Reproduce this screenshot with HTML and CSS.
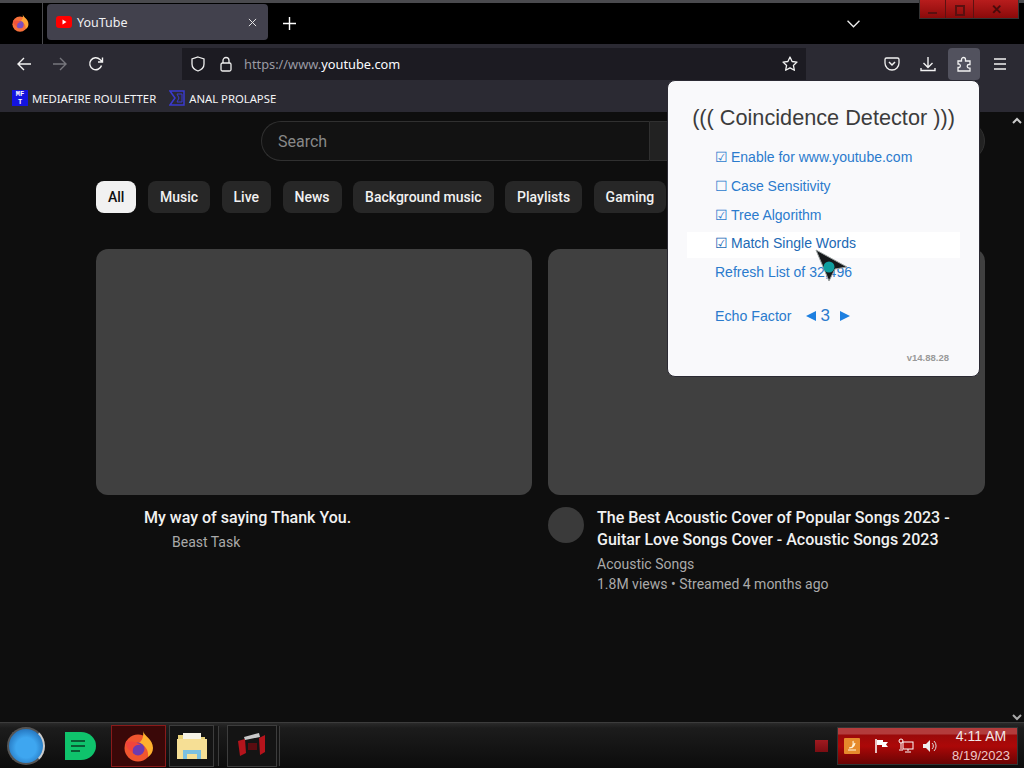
FILE: index.html
```html
<!DOCTYPE html>
<html lang="en">
<head>
<meta charset="utf-8">
<title>YouTube</title>
<link rel="stylesheet" href="styles.css">
</head>
<body>
<div class="desktop">
  <div class="topline"></div>
  <header class="tabbar">
    <div class="ff-slot">
      <svg class="ff-small" viewBox="0 0 32 32"><circle cx="16" cy="18" r="13.500" fill="#f8703a"/><path d="M21 1c1 5 10 8 10 17 0 4-2 7-5 9 1-7-3-12-9-14 3-2 5-7 4-12z" fill="#ffa436"/><circle cx="16" cy="19" r="6.500" fill="#7a4fc0"/><path d="M4 11c3 1 6 0 8 1s5 1 7 3c-5-1-9 2-8 7-5-2-8-6-7-11z" fill="#f1543c"/></svg>
    </div>
    <div class="tab">
      <svg class="yt-icon" viewBox="0 0 16 12"><rect width="16" height="12" rx="3" fill="#f00"/><path d="M6.500 3.500v5l4-2.500z" fill="#fff"/></svg>
      <span class="tab-title">YouTube</span>
      <svg class="tab-close" viewBox="0 0 10 10"><path d="M1 1l8 8M9 1l-8 8" stroke="#e6e6e6" stroke-width="1.100"/></svg>
    </div>
    <svg class="new-tab" viewBox="0 0 12 12"><path d="M6 0v12M0 6h12" stroke="#fff" stroke-width="1.300"/></svg>
    <svg class="tab-list" viewBox="0 0 12 7"><path d="M.5.500L6 6l5.500-5.500" fill="none" stroke="#eee" stroke-width="1.200"/></svg>
  </header>

  <nav class="navbar">
    <svg class="nav-icon" viewBox="0 0 16 16"><path d="M15 8H2M8 2L2 8l6 6" fill="none" stroke="#f2f2f2" stroke-width="1.400"/></svg>
    <svg class="nav-icon" viewBox="0 0 16 16"><path d="M1 8h13M8 2l6 6-6 6" fill="none" stroke="#77777d" stroke-width="1.400"/></svg>
    <svg class="nav-icon" viewBox="0 0 16 16"><path d="M13.500 9.500A6 6 0 1 1 12 3.500L14 5.500M14.500 1.500v4.500h-4.500" fill="none" stroke="#f2f2f2" stroke-width="1.400"/></svg>
    <div class="urlbar">
      <svg class="url-icon" viewBox="0 0 16 16"><path d="M8 1l6 2v5c0 3.500-3 6-6 7-3-1-6-3.500-6-7V3z" fill="none" stroke="#eee" stroke-width="1.300"/></svg>
      <svg class="url-icon" viewBox="0 0 16 16"><path d="M5 7V4.500a3 3 0 0 1 6 0V7" fill="none" stroke="#eee" stroke-width="1.300"/><rect x="3" y="7" width="10" height="8" rx="1.500" fill="none" stroke="#eee" stroke-width="1.300"/></svg>
      <span class="url"><span class="url-dim">https://www.</span>youtube.com</span>
      <svg class="url-star" viewBox="0 0 16 16"><path d="M8 1l2.100 4.500 4.900.6-3.600 3.300 1 4.900L8 11.900l-4.400 2.400 1-4.900L1 6.100l4.900-.6z" fill="none" stroke="#f2f2f2" stroke-width="1.300" stroke-linejoin="round"/></svg>
    </div>
    <div class="nav-right">
      <span class="nr-slot"><svg class="nav-icon" viewBox="0 0 16 16"><path d="M2.500 2h11A1.500 1.500 0 0 1 15 3.500V7a7 7 0 0 1-14 0V3.500A1.500 1.500 0 0 1 2.500 2z" fill="none" stroke="#f2f2f2" stroke-width="1.300"/><path d="M5 6l3 3 3-3" fill="none" stroke="#f2f2f2" stroke-width="1.500"/></svg></span>
      <span class="nr-slot"><svg class="nav-icon" viewBox="0 0 16 16"><path d="M8 1v10M3.500 7L8 11.500 12.500 7M1 12v2.500h14V12" fill="none" stroke="#f2f2f2" stroke-width="1.400"/></svg></span>
      <span class="nr-slot active"><svg class="nav-icon" viewBox="0 0 16 16"><path d="M2 5h3.500V3.500a2 2 0 0 1 4 0V5H14v3.500h-1a1.800 1.800 0 0 0 0 3.600h1V15H2v-3.500h1.200a1.900 1.900 0 0 0 0-3.500H2z" fill="none" stroke="#f2f2f2" stroke-width="1.300"/></svg></span>
      <span class="nr-slot"><svg class="nav-icon" viewBox="0 0 16 16"><path d="M2 3h12M2 8h12M2 13h12" stroke="#f2f2f2" stroke-width="1.400"/></svg></span>
    </div>
  </nav>

  <div class="bookmarks">
    <span class="bm">
      <span class="mf-icon"><span>MF</span><span>T</span></span>MEDIAFIRE ROULETTER
    </span>
    <span class="bm">
      <svg class="bm-icon" viewBox="0 0 16 16"><path d="M1 1h14v14H1l5-7z" fill="none" stroke="#3a3ad0" stroke-width="1.500"/><path d="M8 4h5v8H8l2-4z" fill="none" stroke="#3a3ad0"/></svg>ANAL PROLAPSE
    </span>
  </div>

  <main class="content">
    <svg class="scroll-up" viewBox="0 0 10 7"><path d="M1 6l4-4 4 4" fill="none" stroke="#ccc" stroke-width="2"/></svg>
    <div class="masthead">
      <div class="search">
        <div class="search-input">Search</div>
        <div class="search-btn"></div>
      </div>
    </div>
    <div class="chips">
      <span class="chip on">All</span>
      <span class="chip">Music</span>
      <span class="chip">Live</span>
      <span class="chip">News</span>
      <span class="chip">Background music</span>
      <span class="chip">Playlists</span>
      <span class="chip">Gaming</span>
    </div>
    <div class="videos">
      <article class="video">
        <div class="thumb"></div>
        <div class="meta meta-plain">
          <h3 class="v-title">My way of saying Thank You.</h3>
          <p class="v-sub v-indent">Beast Task</p>
        </div>
      </article>
      <article class="video">
        <div class="thumb"></div>
        <div class="meta">
          <div class="avatar"></div>
          <div>
            <h3 class="v-title">The Best Acoustic Cover of Popular Songs 2023 - Guitar Love Songs Cover - Acoustic Songs 2023</h3>
            <p class="v-sub">Acoustic Songs</p>
            <p class="v-sub">1.8M views • Streamed 4 months ago</p>
          </div>
        </div>
      </article>
    </div>
    <svg class="scroll-down" viewBox="0 0 10 7"><path d="M1 1l4 4 4-4" fill="none" stroke="#aaa" stroke-width="2"/></svg>
  </main>

  <footer class="taskbar">
    <div class="start"></div>
    <svg class="task-app" viewBox="0 0 32 30"><path d="M1 1h16a15 14 0 0 1 0 28H1z" fill="#0fc36c"/><path d="M7 10h14M7 15h14M7 20h9" stroke="#0a5c35" stroke-width="2.200"/></svg>
    <div class="task-btn task-ff">
      <svg class="task-img" viewBox="0 0 32 32"><circle cx="16" cy="18" r="13.500" fill="#f0552f"/><path d="M21 1c1 5 10 8 10 17 0 4-2 7-5 9 1-7-3-12-9-14 3-2 5-7 4-12z" fill="#ffb02e"/><circle cx="16" cy="19" r="6.500" fill="#6e3bb0"/><path d="M4 11c3 1 6 0 8 1s5 1 7 3c-5-1-9 2-8 7-5-2-8-6-7-11z" fill="#f1443c"/></svg>
    </div>
    <div class="task-btn task-files">
      <svg class="task-img" viewBox="0 0 32 32"><path d="M2 5h10l2 2h15v6H2z" fill="#e8d27a"/><rect x="7" y="3" width="18" height="6" fill="#f5f3e6"/><path d="M1 9h30v20H1z" fill="#f6df95"/><path d="M7 20h18v9h-4v-5H11v5H7z" fill="#7cc0e0"/></svg>
    </div>
    <div class="task-btn task-game">
      <svg class="task-img" viewBox="0 0 32 32"><path d="M2 11l7-2 1 14-6 3zM23 8l6-3v17l-5 3z" fill="#b5141c"/><path d="M8 7l15-4 1 4-15 3z" fill="#c9c9c9"/><path d="M12 13h9v7h-9z" fill="#5a0c10"/></svg>
    </div>
    <div class="tray-spacer"></div>
    <div class="tray-mini"></div>
    <div class="tray">
      <svg class="tray-app" viewBox="0 0 16 16"><rect width="16" height="16" rx="1" fill="#e68a2c"/><path d="M4 12h8M5 10c2 0 5-1 6-5M8 10c1-2 2-4 1-7" fill="none" stroke="#fff3d9" stroke-width="1.200"/></svg>
      <svg class="tray-icon" viewBox="0 0 16 16"><path d="M2 1v14" stroke="#fff" stroke-width="1.500"/><path d="M3 2h6v2h5l-2 2.500 2 2.500H8V7H3z" fill="#fff"/></svg>
      <svg class="tray-icon" viewBox="0 0 16 16"><rect x="5" y="4" width="10" height="7" fill="none" stroke="#fff"/><path d="M10 11v2M7 14h6" stroke="#fff"/><circle cx="3" cy="3" r="2" fill="none" stroke="#fff"/><path d="M3 5v6M1 12h4" stroke="#fff"/></svg>
      <svg class="tray-icon" viewBox="0 0 16 16"><path d="M1 6h3l4-4v12l-4-4H1z" fill="#eee"/><path d="M10 5a4 4 0 0 1 0 6M12 3a7 7 0 0 1 0 10" fill="none" stroke="#ddd"/></svg>
      <div class="clock"><span class="clock-time">4:11 AM</span><span class="clock-date">8/19/2023</span></div>
    </div>
  </footer>

  <div class="winbtns">
    <span class="wb wb-min"><i class="wb-glyph-min"></i></span>
    <span class="wb wb-max"><i class="wb-glyph-max"></i></span>
    <span class="wb wb-close">✕</span>
  </div>

  <aside class="popup">
    <h2 class="pop-title">((( Coincidence Detector )))</h2>
    <ul class="pop-list">
      <li class="pop-row"><span class="box">☑</span>Enable for www.youtube.com</li>
      <li class="pop-row"><span class="box">☐</span>Case Sensitivity</li>
      <li class="pop-row"><span class="box">☑</span>Tree Algorithm</li>
      <li class="pop-row hover"><span class="box">☑</span>Match Single Words</li>
      <li class="pop-row">Refresh List of 32,496</li>
    </ul>
    <div class="echo">
      <span>Echo Factor</span>
      <span class="arrow left"></span>
      <span class="echo-val">3</span>
      <span class="arrow right"></span>
    </div>
    <div class="version">v14.88.28</div>
  </aside>

  <svg class="cursor" viewBox="0 0 34 34"><path d="M1 1l31 17-12 2-6 12z" fill="#16191b" stroke="#9aa0a0" stroke-width="1"/><circle cx="14" cy="18" r="5.500" fill="#0f9fa0"/></svg>
</div>
</body>
</html>
```
FILE: styles.css
```css
* { box-sizing: border-box; }
html, body { margin: 0; padding: 0; }
body { width: 1024px; height: 768px; overflow: hidden; background: #0e0e0e; font-family: "Liberation Sans", Arial, sans-serif; }
.desktop { position: relative; width: 1024px; height: 768px; display: flex; flex-direction: column; overflow: hidden; }

.topline { height: 3px; background: #4a4a4e; flex: none; }
.tabbar { height: 41px; flex: none; background: #000; display: flex; align-items: center; }
.ff-slot { width: 43px; height: 41px; border-right: 1px solid #4a4a4e; display: flex; align-items: center; justify-content: center; flex: none; margin-right: 4px; }
.ff-small { width: 18px; height: 18px; margin-left: -3px; margin-top: -1px; }
.tab { width: 221px; height: 36px; margin-top: -3px; background: #42414d; border-radius: 4px; display: flex; align-items: center; padding: 0 11px 0 9px; color: #f0f0f2; font: 12.500px "Noto Sans", sans-serif; flex: none; }
.yt-icon { width: 16px; height: 12px; flex: none; margin-right: 5px; }
.tab-title { flex: 1; }
.tab-close { width: 9px; height: 9px; }
.new-tab { width: 13px; height: 13px; margin-left: 15px; flex: none; }
.tab-list { width: 13px; height: 8px; margin-left: 551px; flex: none; }

.navbar { height: 40px; flex: none; background: #2b2a33; display: flex; align-items: center; padding-left: 16px; }
.nav-icon { width: 16px; height: 16px; flex: none; }
.navbar > .nav-icon { margin-right: 20px; }
.urlbar { width: 624px; height: 32px; margin-left: 58px; background: #1c1b22; display: flex; align-items: center; padding: 0 8px; color: #fbfbfe; flex: none; }
.url-icon { width: 16px; height: 16px; flex: none; margin-right: 12px; }
.url { font: 12.800px "Noto Sans", sans-serif; flex: 1; margin-left: -2px; }
.url-dim { color: #9a9aa3; }
.url-star { width: 16px; height: 16px; }
.nav-right { display: flex; margin-left: 70px; gap: 4px; align-items: center; }
.nr-slot { width: 32px; height: 32px; display: flex; align-items: center; justify-content: center; border-radius: 4px; }
.nr-slot.active { background: #52525e; }

.bookmarks { height: 28px; flex: none; background: #2b2a33; display: flex; align-items: center; padding-left: 12px; gap: 13px; color: #f4f4f6; font: 11.300px "Noto Sans", sans-serif; }
.bm { display: flex; align-items: center; gap: 4px; }
.mf-icon { width: 16px; height: 16px; background: #1414e0; color: #fff; font: bold 7px/8px "Liberation Mono", monospace; display: flex; flex-direction: column; align-items: center; }
.bm-icon { width: 16px; height: 16px; }

.content { flex: 1; position: relative; background: #0e0e0e; padding: 9px 39px 0 96px; color: #f1f1f1; font-family: Roboto, "Liberation Sans", sans-serif; min-height: 0; }
.masthead { padding-left: 165px; }
.search { height: 40px; display: flex; width: 724px; }
.search-input { width: 388px; height: 40px; border: 1px solid #303030; border-right: 0; border-radius: 20px 0 0 20px; background: #121212; padding: 0 16px; font-size: 16px; line-height: 40px; color: #888; }
.search-btn { flex: 1; height: 40px; background: #222; border: 1px solid #303030; border-radius: 0 20px 20px 0; }
.chips { display: flex; gap: 11.500px; margin-top: 20px; height: 32px; }
.chip { height: 32px; padding: 0 12px; border-radius: 8px; background: #272727; font-size: 14px; font-weight: 500; line-height: 32px; white-space: nowrap; color: #f1f1f1; }
.chip.on { background: #f1f1f1; color: #0f0f0f; }
.videos { display: grid; grid-template-columns: 436px 437px; gap: 16px; margin-top: 36px; }
.thumb { height: 246px; background: #404040; border-radius: 12px; }
.meta { display: flex; gap: 13px; margin-top: 12px; }
.meta-plain { display: block; padding-left: 48px; }
.avatar { width: 36px; height: 36px; border-radius: 50%; background: #3a3a3a; flex: none; }
.v-title { margin: 0; font-size: 16px; line-height: 22px; font-weight: 500; color: #f1f1f1; }
.v-sub { margin: 0; font-size: 14px; line-height: 20px; color: #aaa; }
.v-title + .v-sub { margin-top: 3px; }
.v-indent { padding-left: 28px; }
.scroll-up { position: absolute; right: 2px; top: 5px; width: 10px; height: 7px; }
.scroll-down { position: absolute; right: 2px; bottom: 1px; width: 10px; height: 7px; }

.taskbar { height: 46px; flex: none; background: linear-gradient(#2a2a2a 0, #1c1c1c 5px, #0c0c0c 100%); display: flex; align-items: center; padding-left: 7px; border-top: 1px solid #3c3c3c; }
.start { width: 38px; height: 38px; border-radius: 50%; background: radial-gradient(circle at 50% 55%, #3ea6f0 40%, #2372bb 78%, #111 100%); border: 2px solid #555; border-right-color: #ccc; flex: none; }
.task-app { width: 32px; height: 30px; margin-left: 19px; flex: none; }
.task-btn { height: 42px; border: 1px solid #3d3d3d; display: flex; align-items: center; justify-content: center; background: #141414; flex: none; }
.task-ff { margin-left: 15px; width: 55px; padding-right: 2px; background: #3a0808; border-color: #8a1a1a; }
.task-files { margin: 0 13px 0 3px; width: 45px; box-shadow: 5px 0 0 -1px #141414, 6px 0 0 -1px #3d3d3d; }
.task-game { width: 50px; box-shadow: 3px 0 0 -1px #141414, 4px 0 0 -1px #3d3d3d; }
.task-img { width: 32px; height: 32px; }
.tray-spacer { flex: 1; }
.tray-mini { width: 13px; height: 12px; background: linear-gradient(#a01a20, #7a0d12); flex: none; margin-right: 9px; }
.tray { width: 181px; height: 38px; margin-right: 6px; background: linear-gradient(#b33c3c 0, #b33c3c 6px, #9a0a0a 7px, #ac0808 50%, #6a0404 100%); border: 1px solid #333; flex: none; display: flex; align-items: center; padding-left: 6px; }
.tray-app { width: 16px; height: 16px; margin-right: 14px; flex: none; }
.tray-icon { width: 16px; height: 16px; margin-right: 8px; flex: none; }
.clock { flex: 1; display: flex; flex-direction: column; align-items: center; margin-left: -1px; color: #f2e8e8; font-size: 13px; line-height: 20px; }
.clock-time { font-size: 14px; }
.clock-date { color: #f0c8c8; }

.winbtns { position: absolute; top: 0; right: 5px; width: 100px; height: 19px; display: flex; border: 1px solid #333; border-top: 0; background: linear-gradient(#b81d1d, #8a0a0a); }
.wb { flex: 1; display: flex; align-items: flex-end; justify-content: center; color: #4a0a0a; font-size: 13px; line-height: 16px; border-right: 1px solid #5c1212; }
.wb-min { flex: 0 0 26px; }
.wb-max { flex: 0 0 28px; }
.wb-close { border-right: 0; font-weight: bold; }
.wb-glyph-min { width: 9px; height: 2px; background: #5a1010; margin-bottom: 4px; }
.wb-glyph-max { width: 10px; height: 11px; border: 2px solid #5a1010; margin-bottom: 2px; }

.popup { position: absolute; left: 667px; top: 80px; width: 313px; height: 297px; background: #f9f9fb; border-radius: 8px; border: 1px solid #2b2a33; padding: 0 19px; color: #2b7bcd; }
.pop-title { margin: 23px 0 0; text-align: center; font-size: 21.700px; font-weight: 400; line-height: 28px; color: #3c3c3c; white-space: nowrap; }
.pop-list { list-style: none; margin: 11px 0 0; padding: 0; }
.pop-row { height: 28.750px; line-height: 29px; padding-left: 28px; font-size: 14px; white-space: nowrap; }
.box { display: inline-block; width: 16px; }
.pop-row.hover { background: linear-gradient(transparent 3px, #fff 3px); color: #2169b5; }
.echo { margin-top: 18px; padding-left: 28px; font-size: 14.200px; line-height: 22px; display: flex; align-items: center; }
.echo-val { font-size: 17px; margin: 0 10px 0 5px; }
.arrow { width: 0; height: 0; border-top: 5px solid transparent; border-bottom: 5px solid transparent; }
.arrow.left { border-right: 10px solid #1d7fe0; margin-left: 14px; }
.arrow.right { border-left: 10px solid #1d7fe0; }
.version { margin-top: 25px; text-align: right; font-size: 9.500px; font-weight: bold; color: #999; padding-right: 11px; }

.cursor { position: absolute; left: 815px; top: 249px; width: 34px; height: 34px; }
```
